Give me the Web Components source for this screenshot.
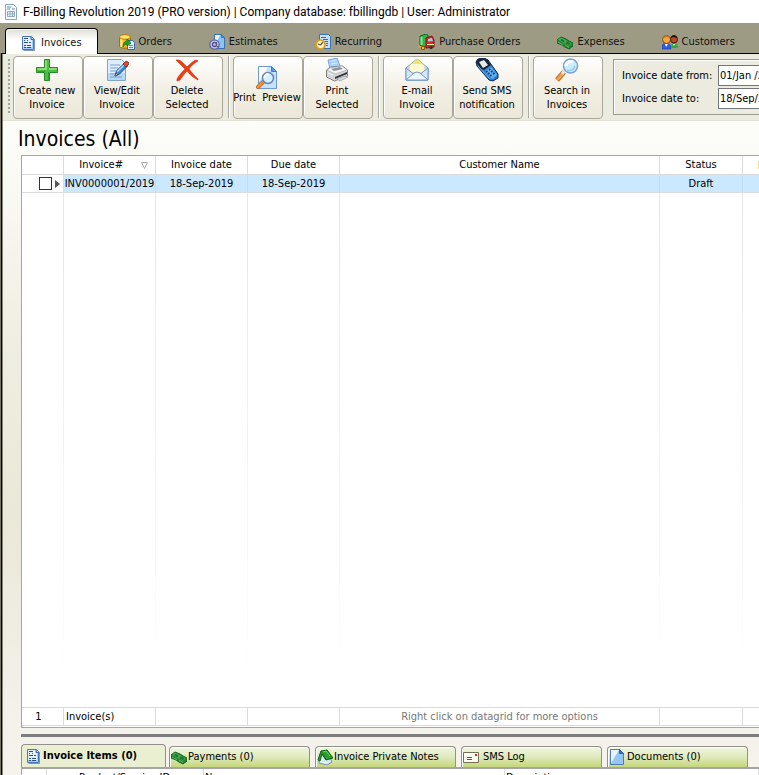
<!DOCTYPE html>
<html lang="en">
<head>
<meta charset="utf-8">
<title>F-Billing Revolution 2019</title>
<style>
html, body { height: 100%; margin: 0; overflow: hidden; background: #fff; }
body { font: 11px/14px "DejaVu Sans Condensed", "DejaVu Sans", sans-serif; color: #000; }
</style>
</head>
<body>
<billing-app></billing-app>
<script>
const ICONS = {
  app: [16, `<path d="M2.500.5h8l3 3v12h-11z" fill="#f5faff" stroke="#8aa4b8"/><path d="M4 3h4M4 5h3M9 5h3" stroke="#6f8ea8"/><path d="M4.500 7.500h7v5h-7zM4 10h8M7 7v6M9.500 7v6" fill="none" stroke="#8eabc0"/>`],
  invoice: [16, `<path d="M1.500 1.500h9l2 2v11h-11z" fill="#e3f1ff" stroke="#4a76bd"/><path d="M2 12h10v2H2zM11 4h1v10h-1z" fill="#a4cdf7"/><path d="M10 1.500v3h2.500" fill="#8db9ec" stroke="#3a66ad"/><path d="M3 3.500h4M3 5.500h1M6 5.500h1M3 7.500h4M8 7.500h2M3 10.500h2M6 10.500h4M3 12.500h2M6 12.500h4" stroke="#2f4f8c"/><path d="M13.500 4v11.500h-11" stroke="#5a7fb8" stroke-width=".8"/>`],
  orders: [16, `<path d="M.5 3v9c0 3 11 3 11 0V3z" fill="#f4b619" stroke="#a86c08"/><path d="M2.500 5v8" stroke="#fff0a0" stroke-width="2"/><path d="M9.500 5v7" stroke="#d38a0a" stroke-width="2"/><ellipse cx="6" cy="3" rx="5.500" ry="2.300" fill="#ffe36a" stroke="#b97c0c"/><path d="M8.500 6.500h5l2 2v7h-7z" fill="#d9edff" stroke="#3c68a9"/><path d="M10 11.500h4M10 13.500h4" stroke="#5e88bd"/><path d="M4 13c0-4 2-6 4-6V5l4 4-4 3v-2c-2 0-3 1-4 3z" fill="#20a32b" stroke="#086712" stroke-width=".7"/>`],
  estimates: [16, `<path d="M5.500.5h7l3 3v11h-10z" fill="#8cc3f7" stroke="#3972b5"/><path d="M6 1h5L6 12z" fill="#eef7ff"/><path d="M12.500.5v3h3" fill="#4e8bd5" stroke="#3972b5"/><circle cx="5.500" cy="10.500" r="4.700" fill="#c5c5e3" stroke="#5d5e9e" stroke-width="1.200"/><circle cx="5.500" cy="10.500" r="2" fill="none" stroke="#51518d" stroke-width="1.300"/><path d="M7.500 8v4l2 1" fill="none" stroke="#51518d"/>`],
  recurring: [16, `<path d="M4.500.5h9l2 2v12h-11z" fill="#c4e0fd" stroke="#3b70b7"/><path d="M6 3.500h5M8 5.500h5M9 7.500h4M11 9.500h2M11 11.500h2" stroke="#3f68a8"/><circle cx="5.500" cy="10.500" r="4.500" fill="#fff3c5" stroke="#dd9a1c" stroke-width="1.700"/><path d="M5.500 11l2.500-3M3 10l2.500 1" stroke="#5d543e" fill="none" stroke-width="1.200"/>`],
  purchase: [16, `<path d="M1 2l6-2 2 1v10l-5 2-3-2z" fill="#33b44b" stroke="#0d6b20"/><path d="M2.500 3v8" stroke="#8ae58e" stroke-width="2"/><path d="M7 4l6-2 2 4v7l-8 1z" fill="#d52b28" stroke="#871111"/><path d="M9 5l4-1 1 3-5 .5z" fill="#a9cde2"/><path d="M8 10.500h7" stroke="#fff0a0"/><path d="M0 12h4v2H0z" fill="#e4a91d"/><circle cx="4" cy="14" r="1.800" fill="#f0b92b" stroke="#785000"/><circle cx="12" cy="13.500" r="1.800" fill="#333"/>`],
  money: [16, `<path d="M0 6l4-3 5 2 3 2 4 2v3l-4 3-4-2-3-2-5-2z" fill="#23852f" stroke="#126122"/><path d="M1 5.500l3-2 6 3-3 3z" fill="#4aac50"/><path d="M7 9l3-2 5 2-3 3z" fill="#3e9f46"/><path d="M4 5.500l3 2M9.500 8.500l3 1.500" stroke="#15702a" stroke-width="2"/><path d="M1 8l5 3M8 11l4 2.500" stroke="#7bc777" stroke-width=".8"/>`],
  customers: [16, `<path d="M0 15c0-4 1-6 4-6s5 2 5 6z" fill="#315ee5" stroke="#1738a0" stroke-width=".6"/><path d="M9 14c0-4 1-5 3-5s4 2 4 5z" fill="#2bac3d"/><circle cx="4.500" cy="5.500" r="4" fill="#f3a53f" stroke="#8f4d0c"/><path d="M1 4c1-4 6-4 7 0L5 3z" fill="#bd7119"/><circle cx="12" cy="5.500" r="3.500" fill="#b94a28" stroke="#421a12"/><path d="M8.500 4c1-4 6-4 7 0l-4-1z" fill="#241312"/><path d="M3 10l1 3 2-3M11 10l1 2 1-2" fill="#fff"/>`],
  plus: [24, `<path d="M9.500 1.500h5v8h8v5h-8v8h-5v-8h-8v-5h8z" fill="#4cbf42" stroke="#278d2a" stroke-linejoin="round"/><path d="M11 2.500v8.500H2.500M14 11h7.500" fill="none" stroke="#a4e48e" stroke-width="1.500"/><path d="M13.500 14v8M3 13.500h7" stroke="#2aa02a" fill="none"/>`],
  edit: [24, `<path d="M2.500 1.500h14l4 4v17h-18z" fill="#dceeff" stroke="#7fa4cf"/><path d="M3 15h17v7H3z" fill="#b3d8f8"/><path d="M5 7h10M5 10h8M5 13h6M5 16h5M5 19h12" stroke="#7f9fc6"/><path d="M10 18l1.500-5 8-8 3 3-8 8z" fill="#3e8bdc" stroke="#174787"/><path d="M12 14l7-7" stroke="#a9d8ff" stroke-width="1.500"/><path d="M18 6l2-2c2-2 5 1 3 3l-2 2z" fill="#e84a24" stroke="#8d2b15"/><path d="M10 18l1-3 2 2z" fill="#edc17f" stroke="#533" stroke-width=".6"/>`],
  delete: [24, `<path d="M1 2l3 0c3 1 6 5 8 7C15 6 18 3 21 2l2 1c-4 2-7 5-9 8 3 4 6 7 9 10v1c-4-2-8-5-11-9-3 3-5 6-7 9l-3 1v-2c2-4 5-7 8-10C7 8 4 5 1 2z" fill="#f43a10" stroke="#d02a06" stroke-width=".6"/>`],
  preview: [26, `<path d="M4.500 2.500h13l5 5v17h-18z" fill="#c6e2fd" stroke="#6d9bd0"/><path d="M5 3h9L5 18z" fill="#fff"/><path d="M17.500 2.500v5h5z" fill="#559be1" stroke="#407fc2"/><path d="M9 18l-5 5" stroke="#a5662a" stroke-width="4" stroke-linecap="round"/><path d="M9 18l-5 5" stroke="#f49235" stroke-width="2.500" stroke-linecap="round"/><circle cx="14" cy="14" r="5.500" fill="#d7f2ff" stroke="#6785ae" stroke-width="1.500"/><path d="M10.500 14a4 4 0 0 1 4-4" fill="none" stroke="#fff" stroke-width="2"/>`],
  printer: [24, `<path d="M5 11L3 2l9-2 3 8z" fill="#a9d1ff" stroke="#7fa5d8"/><path d="M6 3l5-1M6 6l6-1" stroke="#d5e9ff"/><path d="M1.500 12l4-3 12-1 5 4v6l-13 5-8-4z" fill="#d4d6d9" stroke="#808388"/><path d="M2 12l8 4 12-4-5-4-12 2z" fill="#f4f5f5" stroke="#9c9fa3" stroke-width=".6"/><path d="M6 11l9-2 3 2-9 2z" fill="#8a929c"/><path d="M10 19l12-5v2l-12 5z" fill="#353638"/><path d="M3 15l5 2" stroke="#f9f9f9"/><path d="M12 21l8-3 3 1-8 4z" fill="#d8dbe0" stroke="#888" stroke-width=".6"/>`],
  email: [24, `<path d="M1 10L12 1l11 9v12H1z" fill="#dcecff" stroke="#6b92cc"/><path d="M4 8l8-7 8 7v7H4z" fill="#fffbd0" stroke="#b5b899" stroke-width=".7"/><path d="M6 6l6-5 6 5z" fill="#eee669"/><path d="M1 10l9 7h4l9-7v12H1z" fill="#d5e8ff" stroke="#7096d0"/><path d="M1 22l8-7 3-1 3 1 8 7z" fill="#eef6ff" stroke="#7398d1"/>`],
  phone: [24, `<path d="M1 4l2-3 6-1 4 2 10 14v4l-5 3-4-1L2 8z" fill="#2f7fd0" stroke="#0a2957"/><path d="M1 4l2-3 6-1 4 2 3 5-7 5-3-1z" fill="#17243a"/><path d="M4 4l5-2 4 5-5 3z" fill="#e9ece4"/><path d="M10 13l6-4 6 8-5 4z" fill="#5fb0ec"/><path d="M11 14l1.500-1M14 12l1.500-1M13 16l1.500-1M16 14l1.500-1M15 18l1.500-1M18 16l1.500-1" stroke="#123d7a" stroke-width="1.600"/><path d="M3 8l12 13" stroke="#70b5ed"/>`],
  search: [24, `<path d="M9 14L2 22" stroke="#b5702e" stroke-width="5"/><path d="M9 14L2 22" stroke="#f7a044" stroke-width="3"/><path d="M10 12l-3 4" stroke="#dfe3ea" stroke-width="3"/><circle cx="15.500" cy="8" r="7" fill="#c9edff" stroke="#7fa3d0" stroke-width="1.500"/><path d="M11 8c0-4 4-5 7-4" fill="none" stroke="#fff" stroke-width="3"/><path d="M12 12c4 2 7-1 8-4" fill="none" stroke="#91ccef" stroke-width="1.500"/>`],
  notes: [16, `<path d="M3 5l-1 9 8 2 5-3-3-6z" fill="#d7e8f7" stroke="#788ea3"/><path d="M4 2l6-1 6 8-7 2z" fill="#27a12b" stroke="#0a5a12"/><path d="M4 2L1 11l2 1 2-7 4 6" fill="#329d34" stroke="#125e18"/><path d="M6 3l3-1 4 5" fill="none" stroke="#74d463"/><path d="M4 13l5 1" stroke="#fff"/>`],
  sms: [16, `<path d="M.5 3.500h15v10H.5z" fill="#fffef2" stroke="#756f55"/><path d="M4 8.500h5M4 10.500h5" stroke="#2856b5"/><path d="M12 5h2v2h-2z" fill="#d52929"/>`],
  document: [16, `<path d="M1.500.5h9l4 4v11h-13z" fill="#94c6f7" stroke="#527cab"/><path d="M2 1h8L2 14z" fill="#fff" opacity=".8"/><path d="M10.500.5v4h4z" fill="#3977c2" stroke="#355d91"/>`],
};

const define = (name, css, html) => customElements.define(name, class extends HTMLElement {
  constructor() {
    super();
    this.attachShadow({ mode: 'open' }).innerHTML =
      `<style>*{box-sizing:border-box}${css}</style>${typeof html === 'function' ? html(this) : html}`;
  }
});

define('ui-icon', `:host{display:block;flex:none}svg{display:block}`, el => {
  const [n, p] = ICONS[el.getAttribute('name')];
  return `<svg width="${n}" height="${n}" viewBox="0 0 ${n} ${n}" fill="none" aria-hidden="true">${p}</svg>`;
});

define('title-bar', `:host{display:flex;align-items:center;gap:4px;height:23px;padding-left:3px;background:#fff;font:12px/16px Roboto,sans-serif;white-space:nowrap}`,
  `<ui-icon name="app"></ui-icon><slot></slot>`);

define('module-tab', `
:host{display:block;flex:none}
button{display:flex;align-items:center;gap:4px;height:26px;padding:2px 15px 0;border:1px solid transparent;border-bottom:0;background:none;font:inherit;color:#111;white-space:nowrap}
:host([active]) button{border-color:#000;border-radius:4px 4px 0 0;background:linear-gradient(#dedfd2,#fff 45%);box-shadow:inset 1px 1px #f7f7f2}`,
  el => `<button role="tab" aria-selected="${el.hasAttribute('active')}"><ui-icon name="${el.getAttribute('icon')}"></ui-icon><slot></slot></button>`);

define('module-tabs', `:host{display:flex;align-items:flex-end;gap:5px;height:30px;padding-left:5px;background:#9d9b83}
::slotted([active]){margin-bottom:-1px;position:relative;z-index:1}`, `<slot></slot>`);

define('tool-button', `
:host{display:block;width:70px;flex:none}
button{display:flex;flex-direction:column;align-items:center;justify-content:flex-start;gap:2px;width:100%;height:63px;padding:1px 2px 0 0;border:1px solid #aaa79a;border-radius:4px;background:linear-gradient(#fff,#f1eee3 55%,#ece9db);box-shadow:inset 1px 1px #fff;font:inherit;color:#000;white-space:nowrap}
:host([single]) button{padding-top:7px;gap:1px}
span{text-align:center;white-space:pre}`,
  el => `<button><ui-icon name="${el.getAttribute('icon')}"></ui-icon><span><slot></slot></span></button>`);

define('tool-group', `
:host{display:flex;flex:none;padding-right:5px;margin-right:4px;border-right:1px solid #a6a8a4;box-shadow:1px 0 #fff}
:host([last]){border-right:0;box-shadow:none;padding-right:6px}`, `<slot></slot>`);

define('date-field', `
:host{display:grid;grid-template-columns:96px 1fr;align-items:center}
input{width:100%;height:21px;padding:0 1px;border:1px solid #72757a;background:#fff;font:inherit;color:#000}`,
  el => `<label for="d">${el.getAttribute('label')}</label><input id="d" type="text" value="${el.getAttribute('value')}">`);

define('tool-bar', `
:host{display:flex;height:67px;padding:2px 0 2px 5px;background:#ebebdf;border-bottom:1px solid #e2e2d6;overflow:hidden}
.grip{flex:none;width:2px;height:54px;margin:3px 3px 0 0;background:repeating-linear-gradient(#a4a499 0 2px,transparent 2px 4px)}
.dates{flex:1 0 200px;display:grid;gap:2px;align-content:center;height:56px;margin:3px 0 0;padding-left:8px;border:1px solid #9b9b93;border-right:0;box-shadow:inset 1px 1px #fff;white-space:nowrap}`,
  `<div class="grip"></div>
  <tool-group><tool-button icon="plus">Create new
Invoice</tool-button><tool-button icon="edit">View/Edit
Invoice</tool-button><tool-button icon="delete">Delete
Selected</tool-button></tool-group>
  <tool-group><tool-button icon="preview" single>Print  Preview</tool-button><tool-button icon="printer">Print
Selected</tool-button></tool-group>
  <tool-group><tool-button icon="email">E-mail
Invoice</tool-button><tool-button icon="phone">Send SMS
notification</tool-button></tool-group>
  <tool-group last><tool-button icon="search">Search in
Invoices</tool-button></tool-group>
  <div class="dates"><date-field label="Invoice date from:" value="01/Jan /2019"></date-field><date-field label="Invoice date to:" value="18/Sep/2019"></date-field></div>`);

define('invoice-grid', `
:host{display:block;border:1px solid #a5a5a5;border-right:0;background:#fff;padding-bottom:1px}
table{width:100%;height:100%;table-layout:fixed;border-collapse:separate;border-spacing:0}
th,td{padding:0;font-weight:normal;text-align:center;white-space:nowrap;overflow:hidden;border-right:1px solid #dcdcdc}
th:last-child,td:last-child{border-right:0}
thead th{height:19px;border-bottom:1px solid #dadada}
thead th:last-child{background:linear-gradient(#fbd88c,#fbd88c) right center/1px 8px no-repeat}
.row td{height:18px;background:#cce8ff;border-right-color:#c3dcf0;border-bottom:1px solid #dcdcdc}
.row td:first-child{background:#fff;border-right-color:#dcdcdc}
.fill td{border-right:0;background:linear-gradient(#e6e6e6,#fff 96%) right/1px 100% no-repeat}
.fill td:last-child{background:none}
tfoot td{height:19px;border-top:1px solid #dadada;border-bottom:1px solid #dadada}
.sel{display:flex;align-items:center;justify-content:flex-end;gap:3px;padding-right:3px}
input{appearance:none;width:13px;height:13px;margin:0;border:1px solid #333;background:#fff}
.mark{border:4px solid transparent;border-left:5px solid #555;border-right:0}
.sort{display:flex;align-items:center;justify-content:flex-end;gap:18px;padding-right:7px}
.num{padding-right:8px}.left{text-align:left;padding-left:2px}.hint{color:#777}
`, `<table>
<colgroup><col style="width:42px"><col style="width:92px"><col style="width:92px"><col style="width:92px"><col><col style="width:83px"><col style="width:16px"></colgroup>
<thead><tr><th></th><th><div class="sort">Invoice#<svg width="7" height="7" viewBox="0 0 7 7"><path d="M.5.5h6l-3 6z" fill="#fff" stroke="#aaa"/></svg></div></th><th>Invoice date</th><th>Due date</th><th>Customer Name</th><th>Status</th><th></th></tr></thead>
<tbody><tr class="row"><td><div class="sel"><input type="checkbox" aria-label="Select invoice"><span class="mark"></span></div></td><td>INV0000001/2019</td><td>18-Sep-2019</td><td>18-Sep-2019</td><td></td><td>Draft</td><td></td></tr>
<tr class="fill"><td></td><td></td><td></td><td></td><td></td><td></td><td></td></tr></tbody>
<tfoot><tr><td class="num">1</td><td class="left">Invoice(s)</td><td></td><td></td><td class="hint">Right click on datagrid for more options</td><td></td><td></td></tr></tfoot>
</table>`);

define('detail-tab', `
:host{display:block;flex:0 1 141px;min-width:0}
:host([active]){flex-basis:145px}
button{display:flex;align-items:center;gap:1px;width:100%;height:21px;padding:0 1px;border:1px solid #92928c;border-bottom:0;border-radius:4px 4px 0 0;background:linear-gradient(#f2f6e2,#dde8b8 55%,#c4d779);box-shadow:inset 1px 1px #fff;font:inherit;color:#000;white-space:nowrap}
:host([icon=sms]) button{gap:4px}:host([icon=document]) button{gap:2px}
:host([active]) button{height:23px;padding-left:4px;background:#ebefd2;box-shadow:none;font-weight:bold}`,
  el => `<button role="tab" aria-selected="${el.hasAttribute('active')}"><ui-icon name="${el.getAttribute('icon')}"></ui-icon><slot></slot></button>`);

define('detail-tabs', `
:host{display:block}
nav{display:flex;align-items:flex-end;gap:5px;padding-right:11px}
nav :first-child{margin-right:-2px}`, `<nav role="tablist">
<detail-tab icon="invoice" active>Invoice Items (0)</detail-tab><detail-tab icon="money">Payments (0)</detail-tab><detail-tab icon="notes">Invoice Private Notes</detail-tab><detail-tab icon="sms">SMS Log</detail-tab><detail-tab icon="document">Documents (0)</detail-tab></nav>`);

define('items-grid', `
:host{display:block;height:8px;overflow:hidden;border:1px solid #a5a5a5;border-width:2px 0 0 1px;background:#fff}
table{width:100%;table-layout:fixed;border-collapse:separate;border-spacing:0}
th{height:20px;padding:2px 0 0 1px;border-right:1px solid #dcdcdc;font-weight:normal;text-align:left;vertical-align:top;white-space:nowrap}
.id{padding-left:32px}
`, `<table><colgroup><col style="width:25px"><col style="width:157px"><col style="width:301px"><col></colgroup><thead><tr><th></th><th class="id">Product/Service ID</th><th>Name</th><th>Description</th></tr></thead></table>`);

define('billing-app', `
:host{display:flex;flex-direction:column;height:100vh;min-width:0;overflow:hidden}
main{flex:1;min-height:0;display:flex;flex-direction:column;border-left:1px solid #77755f}
.inner{flex:1;min-height:0;display:flex;flex-direction:column;border:solid #000;border-width:1px 0 0 1px;background:linear-gradient(#fdfdf9 67px,#f9f9f4 140px,#f6f3ec 200px,#efeee2 290px,#eae8d8 455px,#eeebe0 550px,#f2f1ea 650px,#f6f3ec 100%)}
.edge{flex:1;min-height:0;display:flex;flex-direction:column;border-left:1px solid #85857c}
h1{margin:5px 0 3px 15px;font-size:21px;line-height:26px;font-weight:normal}
.body{flex:1;min-height:0;display:flex;flex-direction:column;padding-left:18px}
invoice-grid{flex:1;min-height:0}
.split{flex:none;height:3px;margin:6px 0 7px;background:#7d7d7d}
`, `<title-bar>F-Billing Revolution 2019 (PRO version) | Company database: fbillingdb | User: Administrator</title-bar>
<module-tabs role="tablist"><module-tab icon="invoice" active>Invoices</module-tab><module-tab icon="orders">Orders</module-tab><module-tab icon="estimates">Estimates</module-tab><module-tab icon="recurring">Recurring</module-tab><module-tab icon="purchase">Purchase Orders</module-tab><module-tab icon="money">Expenses</module-tab><module-tab icon="customers">Customers</module-tab></module-tabs>
<main><div class="inner"><div class="edge"><tool-bar></tool-bar><h1>Invoices (All)</h1>
<div class="body"><invoice-grid></invoice-grid><div class="split"></div><detail-tabs></detail-tabs><items-grid></items-grid></div></div></div></main>`);
</script>
</body>
</html>
